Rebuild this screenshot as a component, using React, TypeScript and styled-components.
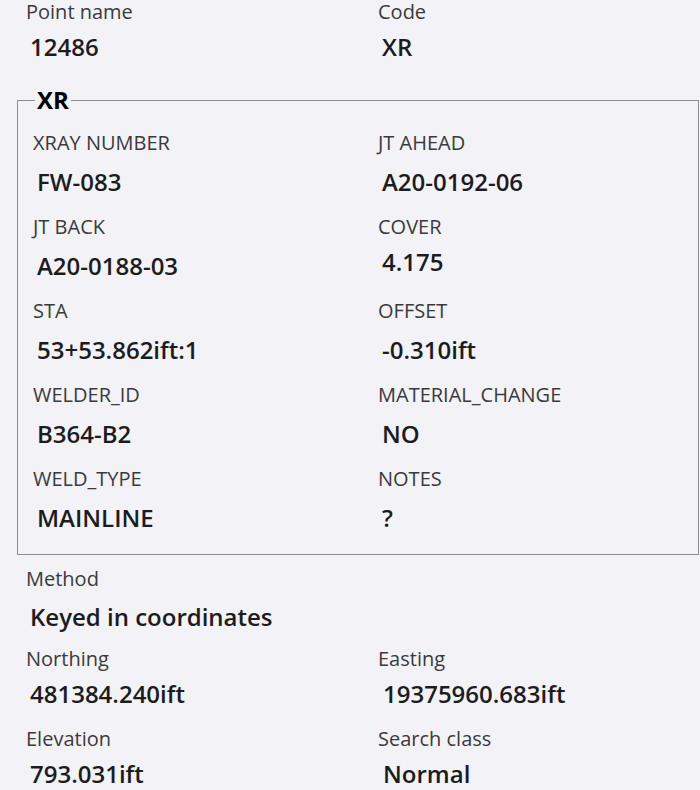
import React from "react";
import styled, { createGlobalStyle } from "styled-components";

const Global = createGlobalStyle`
  html, body {
    margin: 0;
    padding: 0;
    background: #f2f2f7;
  }
  body {
    font-family: "Open Sans", "Noto Sans", sans-serif;
    -webkit-font-smoothing: antialiased;
  }
`;

const Page = styled.div`
  width: 700px;
  height: 790px;
  overflow: hidden;
  box-sizing: border-box;
  padding: 0 1px 0 17px;
  background: #f2f2f7;
`;

const Section = styled.div<{ $rowGap: number }>`
  display: grid;
  grid-template-columns: 352px 1fr;
  row-gap: ${(p) => p.$rowGap}px;
`;

const TopSection = styled.div`
  padding-left: 9px;
`;

const BottomSection = styled.div`
  display: flex;
  flex-direction: column;
  gap: 14px;
  margin-top: 12px;
  padding-left: 9px;
`;

const Group = styled.fieldset`
  margin: 21px 0 0 0;
  padding: 15px 15px 18px 15px;
  border: 1px solid #8e8e93;
  min-width: 0;
  height: 471px;
  box-sizing: border-box;
`;

const Legend = styled.legend`
  margin-left: 2px;
  padding: 0 2px;
  font-size: 24px;
  line-height: 32px;
  font-weight: 700;
  color: #000;
`;

const GroupGrid = styled.div`
  display: grid;
  grid-template-columns: 345px 1fr;
  row-gap: 17.5px;
`;

const Field = styled.div`
  display: flex;
  flex-direction: column;
`;

const Label = styled.div`
  font-size: 20px;
  line-height: 24px;
  color: #3a3a3c;
  white-space: nowrap;
`;

const Value = styled.div<{ $gap: number; $indent?: number }>`
  margin-top: ${(p) => p.$gap}px;
  padding-left: ${(p) => p.$indent ?? 4}px;
  font-size: 24px;
  line-height: 32px;
  font-weight: 600;
  color: #1c1c1e;
  white-space: nowrap;
`;

type Item = { label: string; value: string; gap?: number; indent?: number };

const topItems: Item[] = [
  { label: "Point name", value: "12486" },
  { label: "Code", value: "XR" },
];

const xrItems: Item[] = [
  { label: "XRAY NUMBER", value: "FW-083" },
  { label: "JT AHEAD", value: "A20-0192-06" },
  { label: "JT BACK", value: "A20-0188-03" },
  { label: "COVER", value: "4.175", gap: 6.5 },
  { label: "STA", value: "53+53.862ift:1" },
  { label: "OFFSET", value: "-0.310ift" },
  { label: "WELDER_ID", value: "B364-B2" },
  { label: "MATERIAL_CHANGE", value: "NO" },
  { label: "WELD_TYPE", value: "MAINLINE" },
  { label: "NOTES", value: "?" },
];

const coordItems: Item[] = [
  { label: "Northing", value: "481384.240ift" },
  { label: "Easting", value: "19375960.683ift", indent: 5 },
  { label: "Elevation", value: "793.031ift" },
  { label: "Search class", value: "Normal", indent: 5 },
];

export default function App() {
  return (
    <Page>
      <Global />
      <TopSection>
        <Section $rowGap={0}>
          {topItems.map((it) => (
            <Field key={it.label}>
              <Label>{it.label}</Label>
              <Value $gap={7}>{it.value}</Value>
            </Field>
          ))}
        </Section>
      </TopSection>

      <Group>
        <Legend>XR</Legend>
        <GroupGrid>
          {xrItems.map((it) => (
            <Field key={it.label}>
              <Label>{it.label}</Label>
              <Value $gap={it.gap ?? 10.5}>{it.value}</Value>
            </Field>
          ))}
        </GroupGrid>
      </Group>

      <BottomSection>
        <Field>
          <Label>Method</Label>
          <Value $gap={10}>Keyed in coordinates</Value>
        </Field>
        <Section $rowGap={17}>
          {coordItems.map((it) => (
            <Field key={it.label}>
              <Label>{it.label}</Label>
              <Value $gap={7} $indent={it.indent}>
                {it.value}
              </Value>
            </Field>
          ))}
        </Section>
      </BottomSection>
    </Page>
  );
}
